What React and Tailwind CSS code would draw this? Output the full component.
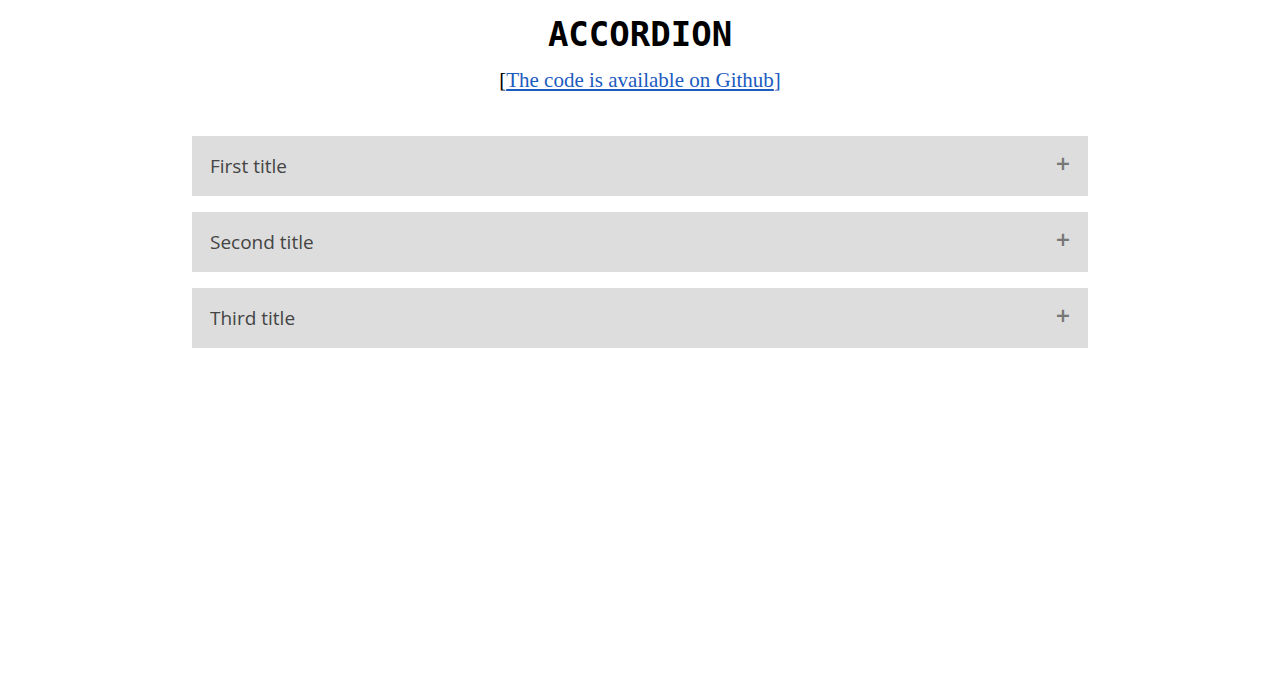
import React, { useState } from "react";

const items = [
  { title: "First title", body: "Content of the first section." },
  { title: "Second title", body: "Content of the second section." },
  { title: "Third title", body: "Content of the third section." },
];

const Item = ({ item }) => {
  const [open, setOpen] = useState(false);
  return (
    <div className="bg-[#dddddd]">
      <button
        onClick={() => setOpen(!open)}
        className="flex w-full h-[60px] items-center justify-between pl-[18px] pr-[17px] text-left text-[19px] text-[#444444] font-['Open_Sans',sans-serif]"
      >
        <span className="pt-[1px]">{item.title}</span>
        <span className="text-[19px] font-bold leading-none text-[#777777] -mt-[6px] font-['DejaVu_Sans',sans-serif]">
          {open ? "−" : "+"}
        </span>
      </button>
      {open && <div className="px-[18px] pb-4 text-[#444444]">{item.body}</div>}
    </div>
  );
};

export default function App() {
  return (
    <div className="min-h-screen bg-white">
      <div className="pt-[14px] text-center">
        <h1 className="text-[34px] font-bold leading-[40px] text-black font-['DejaVu_Sans_Mono',monospace]">
          ACCORDION
        </h1>
        <p className="mt-[13px] text-[21px] leading-[26px] text-black font-['Liberation_Serif',serif]">
          [
          <a href="#" className="text-[#1c5bbf] underline">
            The code is available on Github
          </a>
          <span className="text-[#1c5bbf]">]</span>
        </p>
      </div>
      <div className="mx-auto mt-[43px] flex w-[896px] flex-col gap-4">
        {items.map((item) => (
          <Item key={item.title} item={item} />
        ))}
      </div>
    </div>
  );
}
